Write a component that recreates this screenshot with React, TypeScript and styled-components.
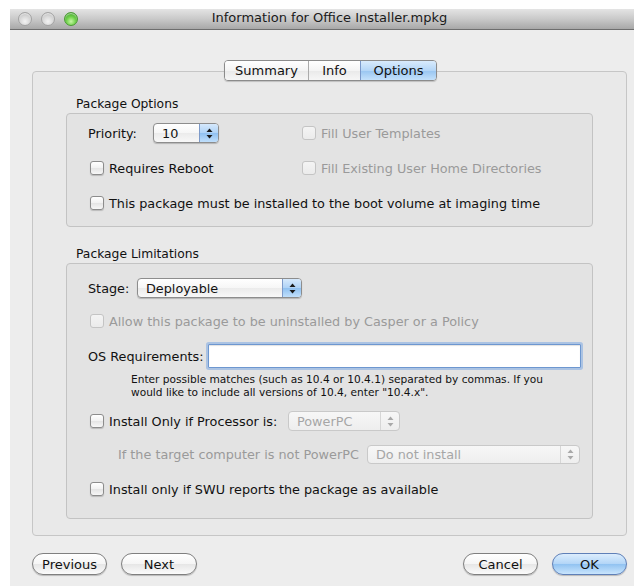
import React from "react";
import styled, { createGlobalStyle, css } from "styled-components";

const GlobalStyle = createGlobalStyle`
  html, body { margin: 0; padding: 0; background: #ffffff; overflow: hidden; }
  body {
    font-family: "DejaVu Sans", "Liberation Sans", sans-serif;
    font-size: 12.8px;
    color: #111;
  }
  * { box-sizing: border-box; }
`;

const Desk = styled.div`
  width: 634px;
  height: 586px;
  padding: 9px 0 0 10px;
  overflow: hidden;
`;

const Window = styled.div`
  width: 639px;
  height: 577px;
  background: #ededed;
  display: flex;
  flex-direction: column;
`;

const TitleBar = styled.div`
  height: 21px;
  flex-shrink: 0;
  display: grid;
  grid-template-columns: 1fr auto 1fr;
  align-items: center;
  background: linear-gradient(#e4e4e4, #c9c9c9 50%, #a8a8a8);
  border-bottom: 1px solid #6e6e6e;
`;

const Lights = styled.div`
  display: flex;
  gap: 9px;
  padding-left: 8px;
`;

const Light = styled.span<{ $green?: boolean }>`
  width: 14px;
  height: 14px;
  border-radius: 50%;
  border: 1px solid ${(p) => (p.$green ? "#4b9a34" : "#a3a3a3")};
  background: ${(p) =>
    p.$green
      ? "radial-gradient(circle at 50% 70%, #c8f7a6 0%, #6fd14a 45%, #2f8f1d 100%)"
      : "radial-gradient(circle at 50% 70%, #f3f3f3 0%, #d7d7d7 50%, #b3b3b3 100%)"};
  box-shadow: inset 0 1px 1px rgba(255, 255, 255, 0.6);
`;

const Title = styled.div`
  font-size: 13px;
  line-height: 16px;
  margin-top: -2px;
  color: #1a1a1a;
  white-space: nowrap;
`;

const Body = styled.div`
  flex: 1;
  display: flex;
  flex-direction: column;
  padding: 30px 12px 0 22px;
`;

const TabStrip = styled.div`
  position: relative;
  z-index: 1;
  width: 595px;
  display: flex;
  justify-content: center;
  padding-left: 2px;
`;

const Segments = styled.div`
  display: flex;
  height: 21px;
  border: 1px solid #8b8b8b;
  border-radius: 4px;
  overflow: hidden;
  box-shadow: 0 1px 1px rgba(0, 0, 0, 0.18);
`;

const Segment = styled.div<{ $on?: boolean; $w: number }>`
  width: ${(p) => p.$w}px;
  display: flex;
  align-items: center;
  justify-content: center;
  font-size: 13px;
  color: #111;
  background: linear-gradient(#ffffff, #f4f4f4 50%, #e9e9e9 51%, #f6f6f6);
  & + & { border-left: 1px solid #ababab; }
  ${(p) =>
    p.$on &&
    css`
      background: linear-gradient(#d9ebfc, #b4d6f7 50%, #98c5f1 51%, #c4e1fb);
      border-left: 1px solid #7a98c9 !important;
    `}
`;

const Frame = styled.div`
  margin-top: -10px;
  width: 595px;
  background: #e9e9e9;
  border: 1px solid #c6c6c6;
  border-radius: 4px;
  padding: 24px 33px 16px 33px;
  display: flex;
  flex-direction: column;
`;

const GroupTitle = styled.div<{ $first?: boolean }>`
  height: 16px;
  line-height: 16px;
  padding-left: 10px;
  margin-top: ${(p) => (p.$first ? 0 : 19)}px;
  margin-bottom: 1px;
  font-size: 12.3px;
`;

const Group = styled.div<{ $pad: string }>`
  background: #e3e3e3;
  border: 1px solid #c3c3c3;
  border-radius: 4px;
  padding: ${(p) => p.$pad};
`;

const OptionsGrid = styled.div`
  display: grid;
  grid-template-columns: 212px 1fr;
  grid-template-rows: 20px 20px 20px;
  row-gap: 15px;
  align-items: center;
`;

const Row = styled.div<{ $span?: boolean; $indent?: number; $mt?: number; $h?: number }>`
  display: flex;
  align-items: center;
  height: ${(p) => p.$h ?? 20}px;
  padding-left: ${(p) => p.$indent ?? 0}px;
  margin-top: ${(p) => p.$mt ?? 0}px;
  ${(p) => p.$span && "grid-column: 1 / -1;"}
  white-space: nowrap;
`;

const Label = styled.span<{ $w?: number; $dim?: boolean }>`
  ${(p) => p.$w && `width: ${p.$w}px; flex-shrink: 0;`}
  color: ${(p) => (p.$dim ? "#9a9a9a" : "#111")};
`;

const Box = styled.span<{ $dim?: boolean }>`
  width: 14px;
  height: 14px;
  margin: 0 5px 0 2px;
  flex-shrink: 0;
  border-radius: 3px;
  border: 1px solid ${(p) => (p.$dim ? "#c4c4c4" : "#8c8c8c")};
  background: ${(p) =>
    p.$dim
      ? "linear-gradient(#f4f4f4, #ebebeb)"
      : "linear-gradient(#ffffff, #f1f1f1 50%, #e4e4e4 51%, #f7f7f7)"};
  box-shadow: ${(p) => (p.$dim ? "none" : "0 1px 1px rgba(0,0,0,0.18)")};
`;

const Popup = styled.div<{ $w: number; $dim?: boolean; $h?: number }>`
  width: ${(p) => p.$w}px;
  height: ${(p) => p.$h ?? 20}px;
  flex-shrink: 0;
  display: flex;
  align-items: stretch;
  border-radius: 4px;
  border: 1px solid ${(p) => (p.$dim ? "#c9c9c9" : "#8d8d8d")};
  background: ${(p) =>
    p.$dim
      ? "linear-gradient(#f7f7f7, #eeeeee)"
      : "linear-gradient(#ffffff, #f6f6f6 50%, #ebebeb 51%, #f8f8f8)"};
  box-shadow: ${(p) => (p.$dim ? "none" : "0 1px 1px rgba(0,0,0,0.2)")};
  color: ${(p) => (p.$dim ? "#a6a6a6" : "#111")};
  overflow: hidden;
`;

const PopupText = styled.span`
  flex: 1;
  display: flex;
  align-items: center;
  padding-left: 8px;
`;

const Stepper = styled.span<{ $dim?: boolean }>`
  width: 19px;
  display: flex;
  align-items: center;
  justify-content: center;
  border-left: 1px solid ${(p) => (p.$dim ? "#d6d6d6" : "#7d9ac9")};
  background: ${(p) =>
    p.$dim
      ? "transparent"
      : "linear-gradient(#d6e9fc, #aed2f6 50%, #8fc0f0 51%, #c0dffb)"};
`;

const Field = styled.div`
  width: 373px;
  height: 24px;
  background: #ffffff;
  border: 1px solid #6d97d0;
  border-radius: 1px;
  box-shadow: 0 0 0 2px rgba(125, 170, 228, 0.55), inset 0 1px 1px rgba(0, 0, 0, 0.12);
`;

const Help = styled.div`
  margin: 5px 0 0 43px;
  font-size: 10.6px;
  line-height: 13px;
  color: #111;
`;

const Footer = styled.div`
  display: flex;
  align-items: center;
  margin-top: 17px;
  width: 595px;
`;

const Spacer = styled.div`
  flex: 1;
`;

const Button = styled.div<{ $w: number; $primary?: boolean }>`
  width: ${(p) => p.$w}px;
  height: 22px;
  border-radius: 11px;
  display: flex;
  align-items: center;
  justify-content: center;
  font-size: 13px;
  color: #111;
  border: 1px solid ${(p) => (p.$primary ? "#5f80b8" : "#7f7f7f")};
  background: ${(p) =>
    p.$primary
      ? "linear-gradient(#dcedfd, #b2d5f7 50%, #91c2f1 51%, #c9e5fd)"
      : "linear-gradient(#ffffff, #f5f5f5 50%, #e6e6e6 51%, #fbfbfb)"};
  box-shadow: 0 1px 1px rgba(0, 0, 0, 0.22);
  & + & { margin-left: 14px; }
`;

const Arrows = ({ dim }: { dim?: boolean }) => (
  <svg width="7" height="11" viewBox="0 0 7 11">
    <path d="M3.5 0.5 L6.5 4 L0.5 4 Z" fill={dim ? "#a9a9a9" : "#1a1a1a"} />
    <path d="M3.5 10.5 L6.5 7 L0.5 7 Z" fill={dim ? "#a9a9a9" : "#1a1a1a"} />
  </svg>
);

const Select = ({
  w,
  value,
  dim,
  h,
}: {
  w: number;
  value: string;
  dim?: boolean;
  h?: number;
}) => (
  <Popup $w={w} $dim={dim} $h={h}>
    <PopupText>{value}</PopupText>
    <Stepper $dim={dim}>
      <Arrows dim={dim} />
    </Stepper>
  </Popup>
);

export default function App() {
  return (
    <>
      <GlobalStyle />
      <Desk>
        <Window>
          <TitleBar>
            <Lights>
              <Light />
              <Light />
              <Light $green />
            </Lights>
            <Title>Information for Office Installer.mpkg</Title>
            <div />
          </TitleBar>
          <Body>
            <TabStrip>
              <Segments>
                <Segment $w={83}>Summary</Segment>
                <Segment $w={52}>Info</Segment>
                <Segment $w={76} $on>
                  Options
                </Segment>
              </Segments>
            </TabStrip>
            <Frame>
              <GroupTitle $first>Package Options</GroupTitle>
              <Group $pad="9px 0 13px 21px">
                <OptionsGrid>
                  <Row>
                    <Label $w={65}>Priority:</Label>
                    <Select w={66} value="10" />
                  </Row>
                  <Row>
                    <Box $dim />
                    <Label $dim>Fill User Templates</Label>
                  </Row>
                  <Row>
                    <Box />
                    <Label>Requires Reboot</Label>
                  </Row>
                  <Row>
                    <Box $dim />
                    <Label $dim>Fill Existing User Home Directories</Label>
                  </Row>
                  <Row $span>
                    <Box />
                    <Label>This package must be installed to the boot volume at imaging time</Label>
                  </Row>
                </OptionsGrid>
              </Group>

              <GroupTitle>Package Limitations</GroupTitle>
              <Group $pad="14px 0 19px 21px">
                <Row>
                  <Label $w={49}>Stage:</Label>
                  <Select w={165} value="Deployable" />
                </Row>
                <Row $mt={13}>
                  <Box $dim />
                  <Label $dim>Allow this package to be uninstalled by Casper or a Policy</Label>
                </Row>
                <Row $mt={13} $h={24}>
                  <Label $w={120}>OS Requirements:</Label>
                  <Field />
                </Row>
                <Help>
                  Enter possible matches (such as 10.4 or 10.4.1) separated by commas. If you
                  <br />
                  would like to include all versions of 10.4, enter "10.4.x".
                </Help>
                <Row $mt={12}>
                  <Box />
                  <Label $w={179}>Install Only if Processor is:</Label>
                  <Select w={112} value="PowerPC" dim />
                </Row>
                <Row $mt={13} $indent={30}>
                  <Label $w={249} $dim>
                    If the target computer is not PowerPC
                  </Label>
                  <Select w={213} value="Do not install" dim h={19} />
                </Row>
                <Row $mt={15}>
                  <Box />
                  <Label>Install only if SWU reports the package as available</Label>
                </Row>
              </Group>
            </Frame>
            <Footer>
              <Button $w={75}>Previous</Button>
              <Button $w={76}>Next</Button>
              <Spacer />
              <Button $w={75}>Cancel</Button>
              <Button $w={75} $primary>
                OK
              </Button>
            </Footer>
          </Body>
        </Window>
      </Desk>
    </>
  );
}
